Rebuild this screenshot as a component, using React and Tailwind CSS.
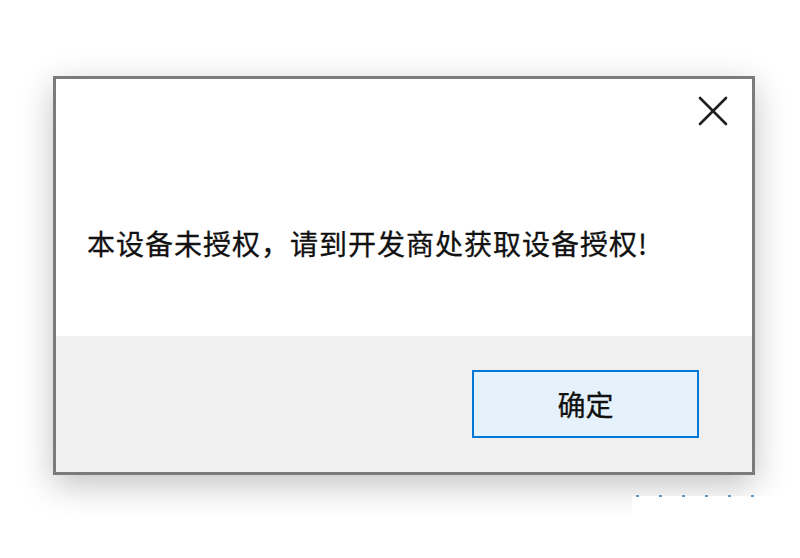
import React from 'react';

const font = { fontFamily: '"Noto Sans CJK SC", "Noto Sans", sans-serif' };

const CloseIcon = () => (
    <svg width="30" height="30" viewBox="0 0 30 30" className="block">
        <path d="M2 2 L28 28 M28 2 L2 28" stroke="#1f1f1f" strokeWidth="2.6" strokeLinecap="round" />
    </svg>
);

export default function App() {
    return (
        <div className="relative w-[800px] h-[558px] bg-white overflow-hidden" style={font}>
            <div className="pt-[76px] pl-[53px]">
                {/* Dialog */}
                <div className="w-[702px] h-[399px] border-[3px] border-[#7b7b7b] bg-white flex flex-col shadow-[0_10px_32px_rgba(0,0,0,0.24)]">
                    <div className="h-[257px] bg-white flex flex-col">
                        <div className="flex justify-end pt-[17px] pr-[24px]">
                            <button className="w-[30px] h-[30px]">
                                <CloseIcon />
                            </button>
                        </div>
                        <p className="mt-[103px] pl-[31px] text-[28px] leading-[28px] text-[#111111] tracking-[1px] whitespace-nowrap [-webkit-text-stroke:0.3px_#111111]">
                            本设备未授权，请到开发商处获取设备授权!
                        </p>
                    </div>
                    <div className="flex-1 bg-[#f0f0f0] flex justify-end items-start pt-[34px] pr-[53px]">
                        <button className="w-[227px] h-[68px] border-2 border-[#0078d7] bg-[#e5f1fb] text-[28px] text-[#111111] [-webkit-text-stroke:0.3px_#111111] flex items-center justify-center">
                            确定
                        </button>
                    </div>
                </div>
            </div>

            {/* white patch over the shadow, bottom right */}
            <div className="absolute left-[632px] top-[496px] w-[154px] h-[62px] bg-white">
                <div className="flex gap-[20px] pl-[4px] -mt-[1px]">
                    <span className="w-[3px] h-[2px] bg-[#5b9bd5]" />
                    <span className="w-[3px] h-[2px] bg-[#5b9bd5]" />
                    <span className="w-[3px] h-[2px] bg-[#5b9bd5]" />
                    <span className="w-[3px] h-[2px] bg-[#5b9bd5]" />
                    <span className="w-[3px] h-[2px] bg-[#5b9bd5]" />
                    <span className="w-[3px] h-[2px] bg-[#5b9bd5]" />
                </div>
            </div>
        </div>
    );
}
